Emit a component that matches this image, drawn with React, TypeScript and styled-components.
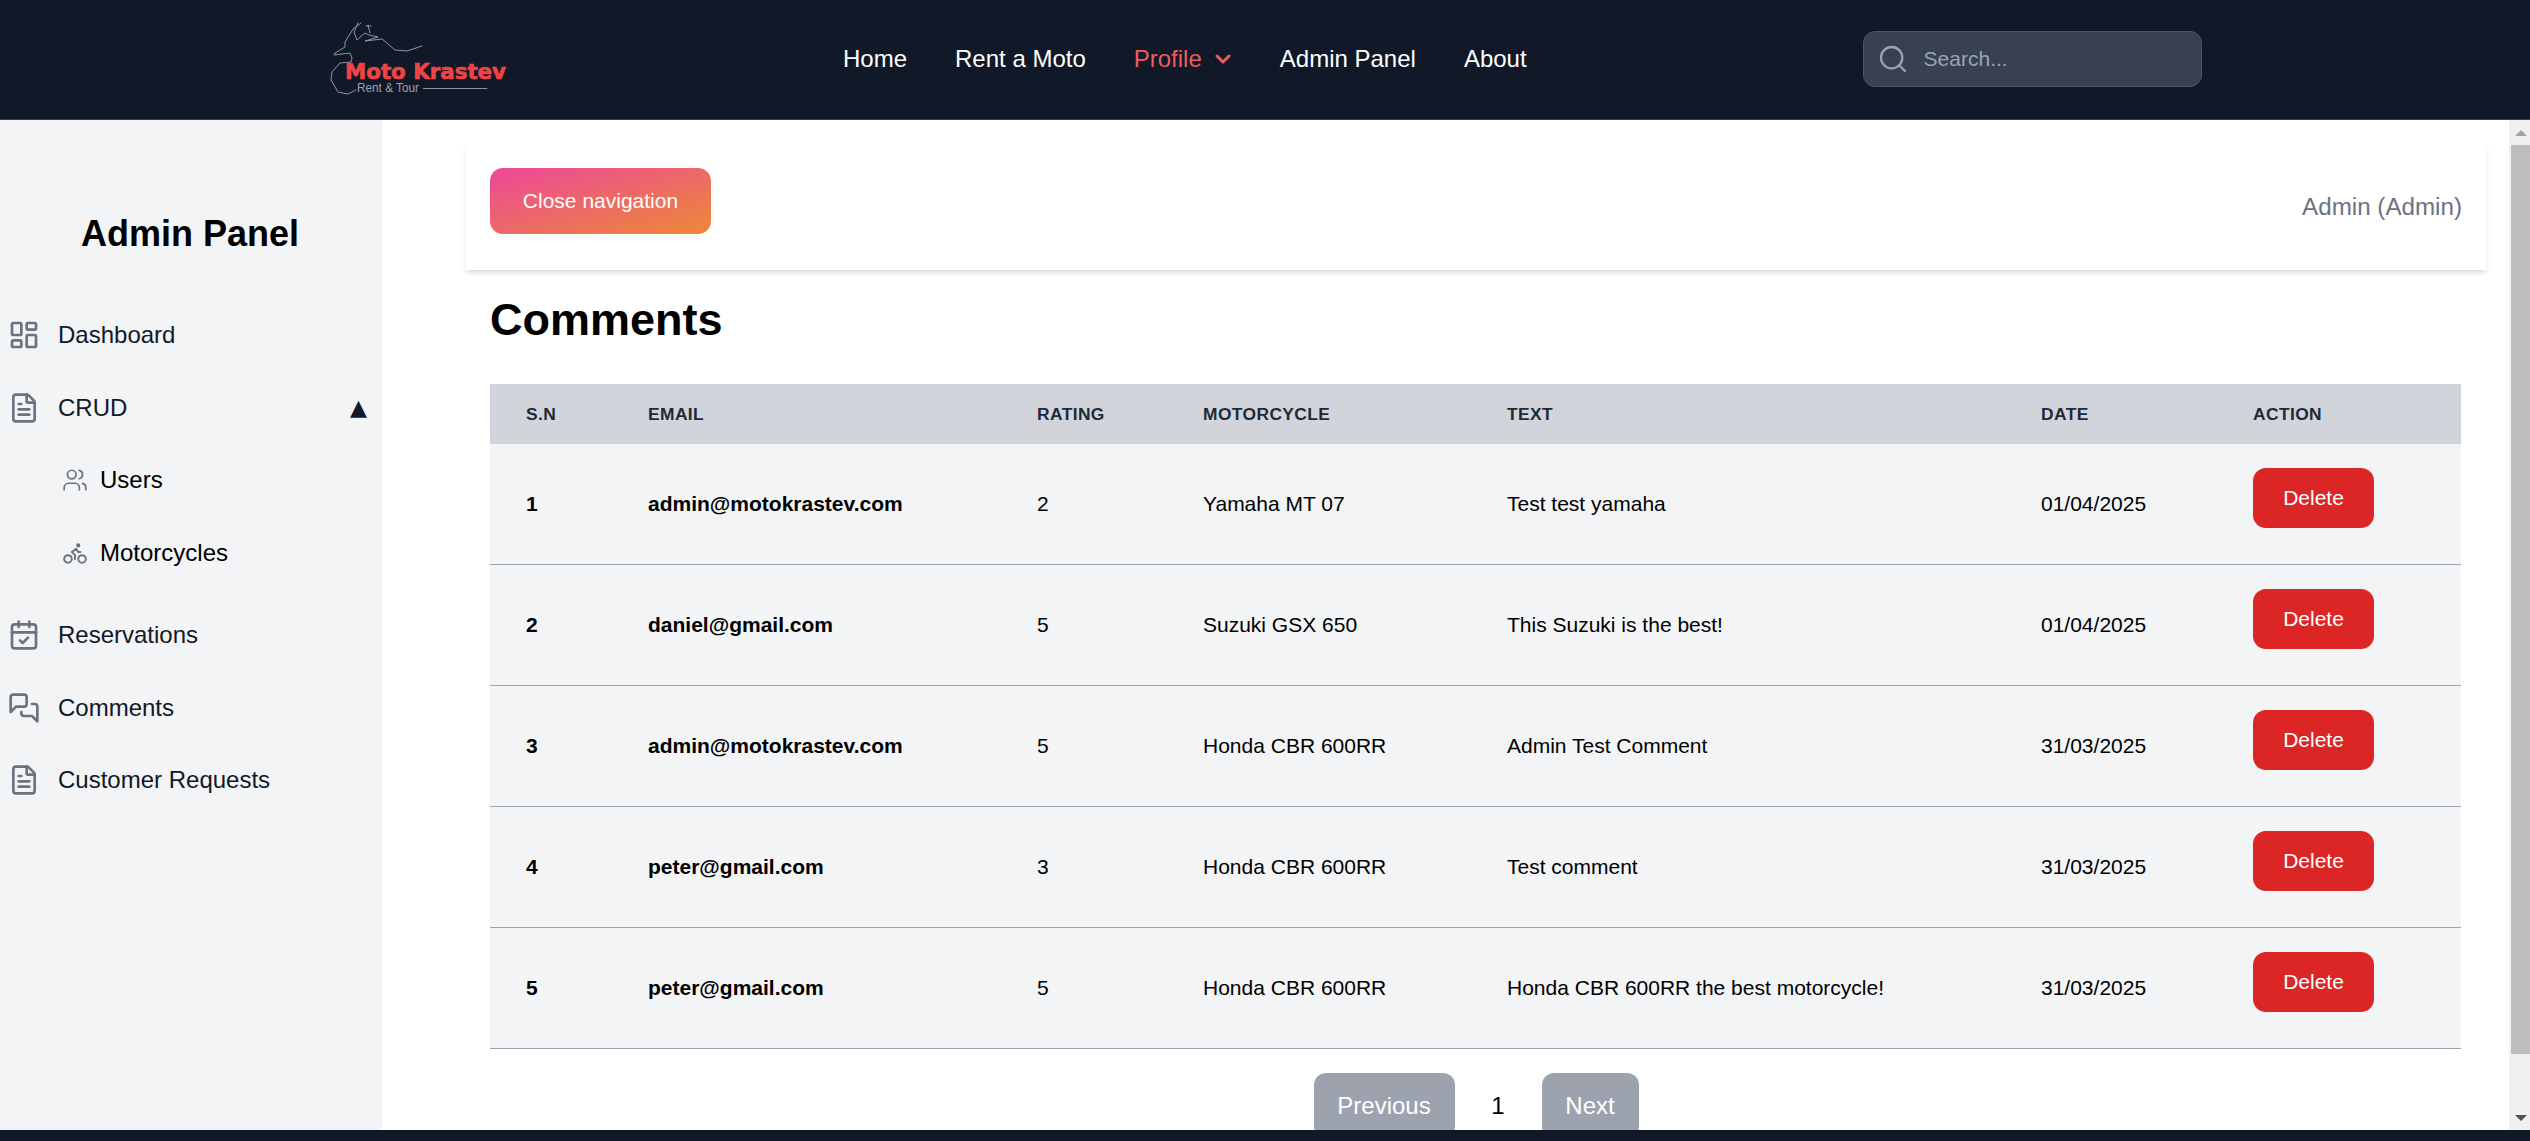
import React from "react";
import styled, { createGlobalStyle } from "styled-components";
import { LayoutDashboard, FileText, Users, Bike, CalendarCheck, ChevronDown, Search } from "lucide-react";

const Global = createGlobalStyle`
  html, body { margin: 0; padding: 0; height: 100%; overflow: hidden; background: #fff; }
  body { font-family: "Liberation Sans", Arial, sans-serif; color: #000; }
  * { box-sizing: border-box; }
`;

const Page = styled.div`
  display: flex;
  flex-direction: column;
  width: 2530px;
  height: 1141px;
  overflow: hidden;
`;

const Header = styled.header`
  flex: 0 0 120px;
  display: flex;
  align-items: center;
  padding-left: 325px;
  background: #111827;
  border-bottom: 1px solid #374151;
`;

const LogoSvg = styled.svg`
  flex: 0 0 190px;
  width: 190px;
  height: 119px;
`;

const LogoName = styled.text`
  font-family: "DejaVu Sans", sans-serif;
  font-weight: 700;
  font-size: 22px;
  fill: #ef4444;
  stroke: #ef4444;
  stroke-width: 0.7px;
`;

const LogoTag = styled.text`
  font-family: "Liberation Sans", sans-serif;
  font-size: 13.5px;
  fill: #9ca3af;
`;

const Nav = styled.nav`
  display: flex;
  align-items: center;
  gap: 48px;
  margin-left: 328px;
  margin-top: -2px;
`;

const NavLink = styled.a<{ $active?: boolean }>`
  display: flex;
  align-items: center;
  gap: 9px;
  font-size: 24px;
  line-height: 32px;
  color: ${(p) => (p.$active ? "#ef5a5f" : "#ffffff")};
`;

const NavChevron = styled(ChevronDown)`
  margin-right: -3px;
`;

const SearchBox = styled.div`
  display: flex;
  align-items: center;
  gap: 13px;
  width: 339px;
  height: 56px;
  margin-left: 336px;
  margin-top: -1px;
  padding-left: 13px;
  background: #374151;
  border: 1px solid #4b5563;
  border-radius: 12px;
  color: #9ca3af;
`;

const SearchInput = styled.input`
  flex: 1;
  min-width: 0;
  border: 0;
  outline: 0;
  background: transparent;
  font-family: inherit;
  font-size: 21px;
  color: #fff;
  &::placeholder { color: #9ca3af; opacity: 1; }
`;

const Body = styled.div`
  flex: 1;
  min-height: 0;
  display: flex;
`;

const Sidebar = styled.aside`
  flex: 0 0 382px;
  background: #f3f4f6;
  padding-top: 87px;
`;

const SideTitle = styled.h2`
  margin: 0 2px 40px 0;
  height: 52px;
  line-height: 53px;
  text-align: center;
  font-size: 36px;
  font-weight: 700;
`;

const SideItem = styled.div<{ $sub?: boolean }>`
  display: flex;
  align-items: center;
  height: 72.5px;
  padding-left: ${(p) => (p.$sub ? "62px" : "8px")};
  gap: ${(p) => (p.$sub ? "12px" : "18px")};
  font-size: 24px;
  color: ${(p) => (p.$sub ? "#000" : "#111827")};
  svg { color: #6b7280; flex: none; }
`;

const Caret = styled.span`
  margin-left: auto;
  margin-right: 15px;
  font-family: "DejaVu Sans", sans-serif;
  font-size: 22px;
  color: #111827;
`;

const SubMenu = styled.div`
  margin-bottom: 10px;
`;

const Main = styled.main`
  flex: 1;
  min-width: 0;
  overflow: hidden;
  padding: 24px 23px 0 84px;
`;

const TopCard = styled.div`
  display: flex;
  align-items: center;
  justify-content: space-between;
  height: 126px;
  padding: 0 24px;
  background: #fff;
  box-shadow: 0 4px 6px -1px rgba(0, 0, 0, 0.12), 0 2px 4px -2px rgba(0, 0, 0, 0.1);
`;

const GradientButton = styled.button`
  width: 221px;
  height: 66px;
  margin-top: -12px;
  border: 0;
  border-radius: 13px;
  background: linear-gradient(to bottom right, #ec4899, #ed8936);
  color: #fff;
  font-family: inherit;
  font-size: 21px;
`;

const UserLabel = styled.span`
  font-size: 24.2px;
  color: #6b7280;
  margin-top: -1px;
`;

const Content = styled.section`
  padding: 0 24px 0;
`;

const Heading = styled.h1`
  margin: 24px 0 38px 0;
  height: 52px;
  line-height: 52px;
  font-size: 45px;
  font-weight: 700;
`;

const Table = styled.table`
  width: 1971px;
  table-layout: fixed;
  border-collapse: separate;
  border-spacing: 0;
`;

const Th = styled.th`
  height: 60px;
  padding: 0 0 0 36px;
  background: #d1d5db;
  text-align: left;
  font-size: 17.4px;
  font-weight: 700;
  letter-spacing: 0.4px;
  text-transform: uppercase;
  color: #1f2937;
`;

const Td = styled.td<{ $strong?: boolean }>`
  height: 121px;
  padding: 0 0 0 36px;
  background: #f3f4f6;
  border-bottom: 1px solid #9ca3af;
  font-size: 21px;
  font-weight: ${(p) => (p.$strong ? 700 : 400)};
  vertical-align: middle;
`;

const DeleteButton = styled.button`
  display: block;
  width: 121px;
  height: 60px;
  margin-bottom: 12px;
  border: 0;
  border-radius: 13px;
  background: #dc2626;
  color: #fff;
  font-family: inherit;
  font-size: 21px;
`;

const Pagination = styled.div`
  display: flex;
  justify-content: center;
  align-items: center;
  margin-top: 24px;
  font-size: 24px;
`;

const PageNumber = styled.span`
  width: 87px;
  text-align: center;
`;

const PageButton = styled.button<{ $width: number }>`
  width: ${(p) => p.$width}px;
  height: 65px;
  padding: 0;
  border: 0;
  border-radius: 12px;
  background: #9ca3af;
  color: #fff;
  font-family: inherit;
  font-size: 24px;
`;

const Scrollbar = styled.div`
  flex: 0 0 21px;
  display: flex;
  flex-direction: column;
  align-items: flex-end;
  background: #f0f0f0;
`;

const ScrollArrow = styled.div<{ $down?: boolean }>`
  flex: 0 0 25px;
  align-self: stretch;
  display: flex;
  align-items: center;
  justify-content: center;
  padding-left: 2px;
  &::before {
    content: "";
    border-left: 6px solid transparent;
    border-right: 6px solid transparent;
    ${(p) => (p.$down ? "border-top: 6px solid #505050;" : "border-bottom: 6px solid #a3a3a3;")}
  }
`;

const ScrollThumb = styled.div`
  flex: 0 0 909px;
  width: 19px;
  background: #bdbdbd;
`;

const ScrollGap = styled.div`
  flex: 1;
`;

const Footer = styled.footer`
  flex: 0 0 11px;
  background: #111827;
`;

const rows = [
  ["1", "admin@motokrastev.com", "2", "Yamaha MT 07", "Test test yamaha", "01/04/2025"],
  ["2", "daniel@gmail.com", "5", "Suzuki GSX 650", "This Suzuki is the best!", "01/04/2025"],
  ["3", "admin@motokrastev.com", "5", "Honda CBR 600RR", "Admin Test Comment", "31/03/2025"],
  ["4", "peter@gmail.com", "3", "Honda CBR 600RR", "Test comment", "31/03/2025"],
  ["5", "peter@gmail.com", "5", "Honda CBR 600RR", "Honda CBR 600RR the best motorcycle!", "31/03/2025"],
];

const colWidths = [122, 389, 166, 304, 534, 212, 244];
const heads = ["S.N", "Email", "Rating", "Motorcycle", "Text", "Date", "Action"];

function CommentsIcon() {
  return (
    <svg width="32" height="32" viewBox="0 0 24 24" fill="none" stroke="currentColor" strokeWidth="2" strokeLinecap="round" strokeLinejoin="round">
      <path d="M14 9a2 2 0 0 1-2 2H6l-4 4V4c0-1.1.9-2 2-2h8a2 2 0 0 1 2 2v5Z" />
      <path d="M18 9h2a2 2 0 0 1 2 2v11l-4-4h-6a2 2 0 0 1-2-2v-1" />
    </svg>
  );
}

function Logo() {
  return (
    <LogoSvg viewBox="325 0 190 119">
      <g fill="none" stroke="#9ca3af" strokeWidth="0.9" strokeLinecap="round" strokeLinejoin="round">
        <path d="M361 23 L353 29 L345 42 L345 47 L335 53 L334 55 L350 53 L352 58 L351 62 L340 63 L332 72 L331 80 L338 92 L348 94 L356 90" />
        <path d="M358 23 L354 32 L357 40 L365 33 L369 35 L378 37 L365 41 L382 39 L395 50 L407 51 L422 46" />
        <path d="M368 25 L370 33 M366 26 L371 26" />
        <path d="M423.5 88.5 L487 88.5" />
      </g>
      <LogoName x="345" y="79" textLength="161" lengthAdjust="spacingAndGlyphs">Moto Krastev</LogoName>
      <LogoTag x="357" y="92" textLength="62" lengthAdjust="spacingAndGlyphs">Rent &amp; Tour</LogoTag>
    </LogoSvg>
  );
}

export default function App() {
  return (
    <Page>
      <Global />
      <Header>
        <Logo />
        <Nav>
          <NavLink>Home</NavLink>
          <NavLink>Rent a Moto</NavLink>
          <NavLink $active>
            Profile
            <NavChevron size={24} strokeWidth={3} />
          </NavLink>
          <NavLink>Admin Panel</NavLink>
          <NavLink>About</NavLink>
        </Nav>
        <SearchBox>
          <Search size={32} strokeWidth={1.7} />
          <SearchInput placeholder="Search..." />
        </SearchBox>
      </Header>
      <Body>
        <Sidebar>
          <SideTitle>Admin Panel</SideTitle>
          <SideItem>
            <LayoutDashboard size={32} strokeWidth={2} />
            Dashboard
          </SideItem>
          <SideItem>
            <FileText size={32} strokeWidth={2} />
            CRUD
            <Caret>▲</Caret>
          </SideItem>
          <SubMenu>
            <SideItem $sub>
              <Users size={26} strokeWidth={1.6} />
              Users
            </SideItem>
            <SideItem $sub>
              <Bike size={26} strokeWidth={1.8} />
              Motorcycles
            </SideItem>
          </SubMenu>
          <SideItem>
            <CalendarCheck size={32} strokeWidth={2} />
            Reservations
          </SideItem>
          <SideItem>
            <CommentsIcon />
            Comments
          </SideItem>
          <SideItem>
            <FileText size={32} strokeWidth={2} />
            Customer Requests
          </SideItem>
        </Sidebar>
        <Main>
          <TopCard>
            <GradientButton>Close navigation</GradientButton>
            <UserLabel>Admin (Admin)</UserLabel>
          </TopCard>
          <Content>
            <Heading>Comments</Heading>
            <Table>
              <colgroup>
                {colWidths.map((w, i) => (
                  <col key={i} width={w} />
                ))}
              </colgroup>
              <thead>
                <tr>
                  {heads.map((h) => (
                    <Th key={h}>{h}</Th>
                  ))}
                </tr>
              </thead>
              <tbody>
                {rows.map((r) => (
                  <tr key={r[0]}>
                    {r.map((c, i) => (
                      <Td key={i} $strong={i < 2}>
                        {c}
                      </Td>
                    ))}
                    <Td>
                      <DeleteButton>Delete</DeleteButton>
                    </Td>
                  </tr>
                ))}
              </tbody>
            </Table>
            <Pagination>
              <PageButton $width={141}>Previous</PageButton>
              <PageNumber>1</PageNumber>
              <PageButton $width={97}>Next</PageButton>
            </Pagination>
          </Content>
        </Main>
        <Scrollbar>
          <ScrollArrow />
          <ScrollThumb />
          <ScrollGap />
          <ScrollArrow $down />
        </Scrollbar>
      </Body>
      <Footer />
    </Page>
  );
}
